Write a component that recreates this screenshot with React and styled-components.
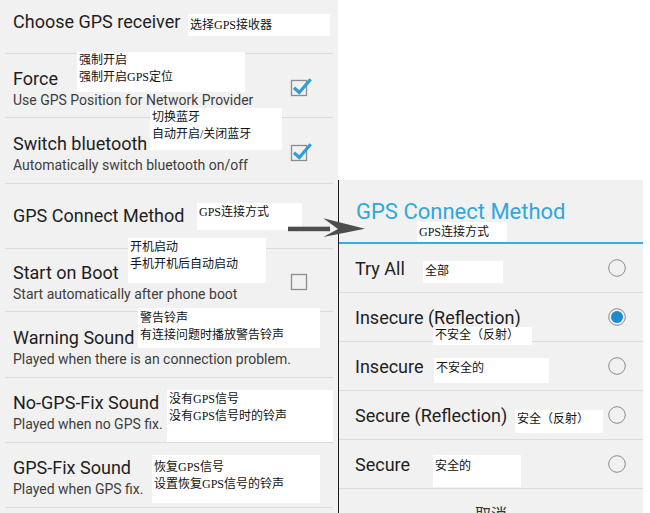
import React from "react";
import styled, { createGlobalStyle } from "styled-components";

const GlobalStyle = createGlobalStyle`
  html, body { margin: 0; padding: 0; background: #ffffff; }
  body { font-family: Roboto, "Noto Sans", sans-serif; }
  * { box-sizing: content-box; }
`;

const Page = styled.div`
  position: relative;
  display: flex;
  width: 650px;
  height: 513px;
  overflow: hidden;
  background: #ffffff;
`;

const Settings = styled.section`
  width: 338px;
  flex: none;
  background: #f1f1f1;
  display: flex;
  flex-direction: column;
`;

const PrefRow = styled.div`
  position: relative;
  flex: none;
  height: ${(p) => p.$h}px;
  margin: 0 5px;
  display: flex;
  align-items: center;
  border-bottom: 1px solid #dcdcdc;
`;

const PrefText = styled.div`
  flex: 1;
  display: flex;
  flex-direction: column;
  padding-left: 8px;
  padding-top: ${(p) => Math.max(p.$shift || 0, 0)}px;
  padding-bottom: ${(p) => Math.max(-(p.$shift || 0), 0)}px;
`;

const PrefTitle = styled.div`
  font-size: 18px;
  line-height: 22px;
  color: #1e1e1e;
  white-space: nowrap;
`;

const PrefSummary = styled.div`
  font-size: 14px;
  line-height: 20px;
  color: #3d3d3d;
  white-space: nowrap;
`;

const CheckWrap = styled.div`
  flex: none;
  width: 24px;
  height: 22px;
  margin-right: 19px;
  display: flex;
`;

const Note = styled.div`
  position: absolute;
  z-index: 1;
  left: ${(p) => p.$x}px;
  top: ${(p) => p.$y}px;
  width: ${(p) => p.$w}px;
  height: ${(p) => p.$h}px;
  box-sizing: border-box;
  padding: ${(p) => p.$pt || 0}px 0 0 2px;
  background: #ffffff;
  font-family: "Liberation Serif", "Noto Sans CJK SC", serif;
  font-size: 12px;
  line-height: 17px;
  color: #111111;
  white-space: nowrap;
`;

const NoteLine = styled.div``;

const RightColumn = styled.div`
  flex: 1;
  display: flex;
  flex-direction: column;
`;

const TopBlank = styled.div`
  flex: none;
  height: 180px;
`;

const Dialog = styled.section`
  flex: 1;
  width: 304px;
  border-left: 1px solid #1c1c1c;
  background: #f1f1f1;
  display: flex;
  flex-direction: column;
`;

const DialogTitle = styled.div`
  position: relative;
  flex: none;
  height: 62px;
  padding-left: 17px;
  display: flex;
  align-items: center;
  border-bottom: 2px solid #33aee0;
  font-size: 22px;
  color: #2ea8de;
  white-space: nowrap;
`;

const OptionRow = styled.div`
  position: relative;
  flex: none;
  height: 48px;
  padding-left: 16px;
  display: flex;
  align-items: center;
  border-bottom: 1px solid #dcdcdc;
`;

const OptionLabel = styled.div`
  flex: 1;
  font-size: 18px;
  color: #1e1e1e;
  white-space: nowrap;
`;

const RadioWrap = styled.div`
  flex: none;
  width: 20px;
  height: 20px;
  margin-right: 16px;
  display: flex;
`;

const CancelButton = styled.div`
  flex: none;
  height: 48px;
  display: flex;
  align-items: center;
  justify-content: center;
  font-family: "Noto Sans CJK SC", sans-serif;
  font-size: 16px;
  color: #333333;
`;

const ArrowLayer = styled.svg`
  position: absolute;
  z-index: 3;
  left: 286px;
  top: 214px;
`;

function CheckBox({ checked }) {
  return (
    <CheckWrap>
      <svg width="24" height="22" viewBox="0 0 24 22">
        <rect x="1.5" y="5.5" width="15" height="15" fill="none" stroke="#8c8c8c" strokeWidth="1.3" />
        {checked && (
          <polyline
            points="4,12.7 9.3,17.5 20.7,4.3"
            fill="none"
            stroke="#2b9fd9"
            strokeWidth="3.2"
            strokeLinejoin="miter"
          />
        )}
      </svg>
    </CheckWrap>
  );
}

function Radio({ selected }) {
  return (
    <RadioWrap>
      <svg width="20" height="20" viewBox="0 0 20 20">
        <circle cx="10" cy="10" r="8.3" fill="none" stroke="#8c8c8c" strokeWidth="1" />
        {selected && <circle cx="10" cy="10" r="6" fill="#1b8ccf" />}
      </svg>
    </RadioWrap>
  );
}

function Annotation({ x, y, w, h, pt, lines }) {
  return (
    <Note $x={x} $y={y} $w={w} $h={h} $pt={pt}>
      {lines.map((l) => (
        <NoteLine key={l}>{l}</NoteLine>
      ))}
    </Note>
  );
}

const prefs = [
  { h: 53, shift: -9, title: "Choose GPS receiver", note: { x: 183, y: 14, w: 142, h: 22, pt: 3, lines: ["选择GPS接收器"] } },
  { h: 63, shift: 6, title: "Force", summary: "Use GPS Position for Network Provider", check: true, note: { x: 72, y: -2, w: 168, h: 40, pt: 0, lines: ["强制开启", "强制开启GPS定位"] } },
  { h: 65, shift: 6, title: "Switch bluetooth", summary: "Automatically switch bluetooth on/off", check: true, note: { x: 145, y: -10, w: 132, h: 42, pt: 1, lines: ["切换蓝牙", "自动开启/关闭蓝牙"] } },
  { h: 64, shift: 0, title: "GPS Connect Method", note: { x: 192, y: 19, w: 105, h: 27, pt: 1, lines: ["GPS连接方式"] } },
  { h: 62, shift: 6, title: "Start on Boot", summary: "Start automatically after phone boot", check: false, note: { x: 123, y: -11, w: 138, h: 45, pt: 1, lines: ["开机启动", "手机开机后自动启动"] } },
  { h: 65, shift: 6, title: "Warning Sound", summary: "Played when there is an connection problem.", note: { x: 133, y: -4, w: 182, h: 40, pt: 2, lines: ["警告铃声", "有连接问题时播放警告铃声"] } },
  { h: 64, shift: 5, title: "No-GPS-Fix Sound", summary: "Played when no GPS fix.", note: { x: 162, y: 12, w: 166, h: 52, pt: 1, lines: ["没有GPS信号", "没有GPS信号时的铃声"] } },
  { h: 64, shift: 5, title: "GPS-Fix Sound", summary: "Played when GPS fix.", note: { x: 147, y: 12, w: 168, h: 48, pt: 4, lines: ["恢复GPS信号", "设置恢复GPS信号的铃声"] } },
];

const options = [
  { label: "Try All", note: { x: 84, y: 17, w: 80, h: 22, pt: 2, lines: ["全部"] } },
  { label: "Insecure (Reflection)", selected: true, note: { x: 94, y: 34, w: 99, h: 18, pt: 0, lines: ["不安全（反射）"] } },
  { label: "Insecure", note: { x: 95, y: 16, w: 115, h: 25, pt: 2, lines: ["不安全的"] } },
  { label: "Secure (Reflection)", note: { x: 176, y: 19, w: 88, h: 23, pt: 1, lines: ["安全（反射）"] } },
  { label: "Secure", note: { x: 94, y: 15, w: 88, h: 32, pt: 3, lines: ["安全的"] } },
];

export default function App() {
  return (
    <>
      <GlobalStyle />
      <Page>
        <Settings>
          {prefs.map((p) => (
            <PrefRow key={p.title} $h={p.h}>
              <PrefText $shift={p.shift}>
                <PrefTitle>{p.title}</PrefTitle>
                {p.summary && <PrefSummary>{p.summary}</PrefSummary>}
              </PrefText>
              {p.check !== undefined && <CheckBox checked={p.check} />}
              <Annotation {...p.note} />
            </PrefRow>
          ))}
        </Settings>
        <RightColumn>
          <TopBlank />
          <Dialog>
            <DialogTitle>
              GPS Connect Method
              <Annotation x={78} y={42} w={90} h={20} pt={2} lines={["GPS连接方式"]} />
            </DialogTitle>
            {options.map((o) => (
              <OptionRow key={o.label}>
                <OptionLabel>{o.label}</OptionLabel>
                <Radio selected={o.selected} />
                <Annotation {...o.note} />
              </OptionRow>
            ))}
            <CancelButton>取消</CancelButton>
          </Dialog>
        </RightColumn>
        <ArrowLayer width="82" height="28" viewBox="0 0 82 28">
          <rect x="2" y="12.7" width="42" height="4.5" fill="#4d4d4d" />
          <polygon points="37.3,4.3 79,14.8 37.3,23 52,15" fill="#4d4d4d" />
        </ArrowLayer>
      </Page>
    </>
  );
}
